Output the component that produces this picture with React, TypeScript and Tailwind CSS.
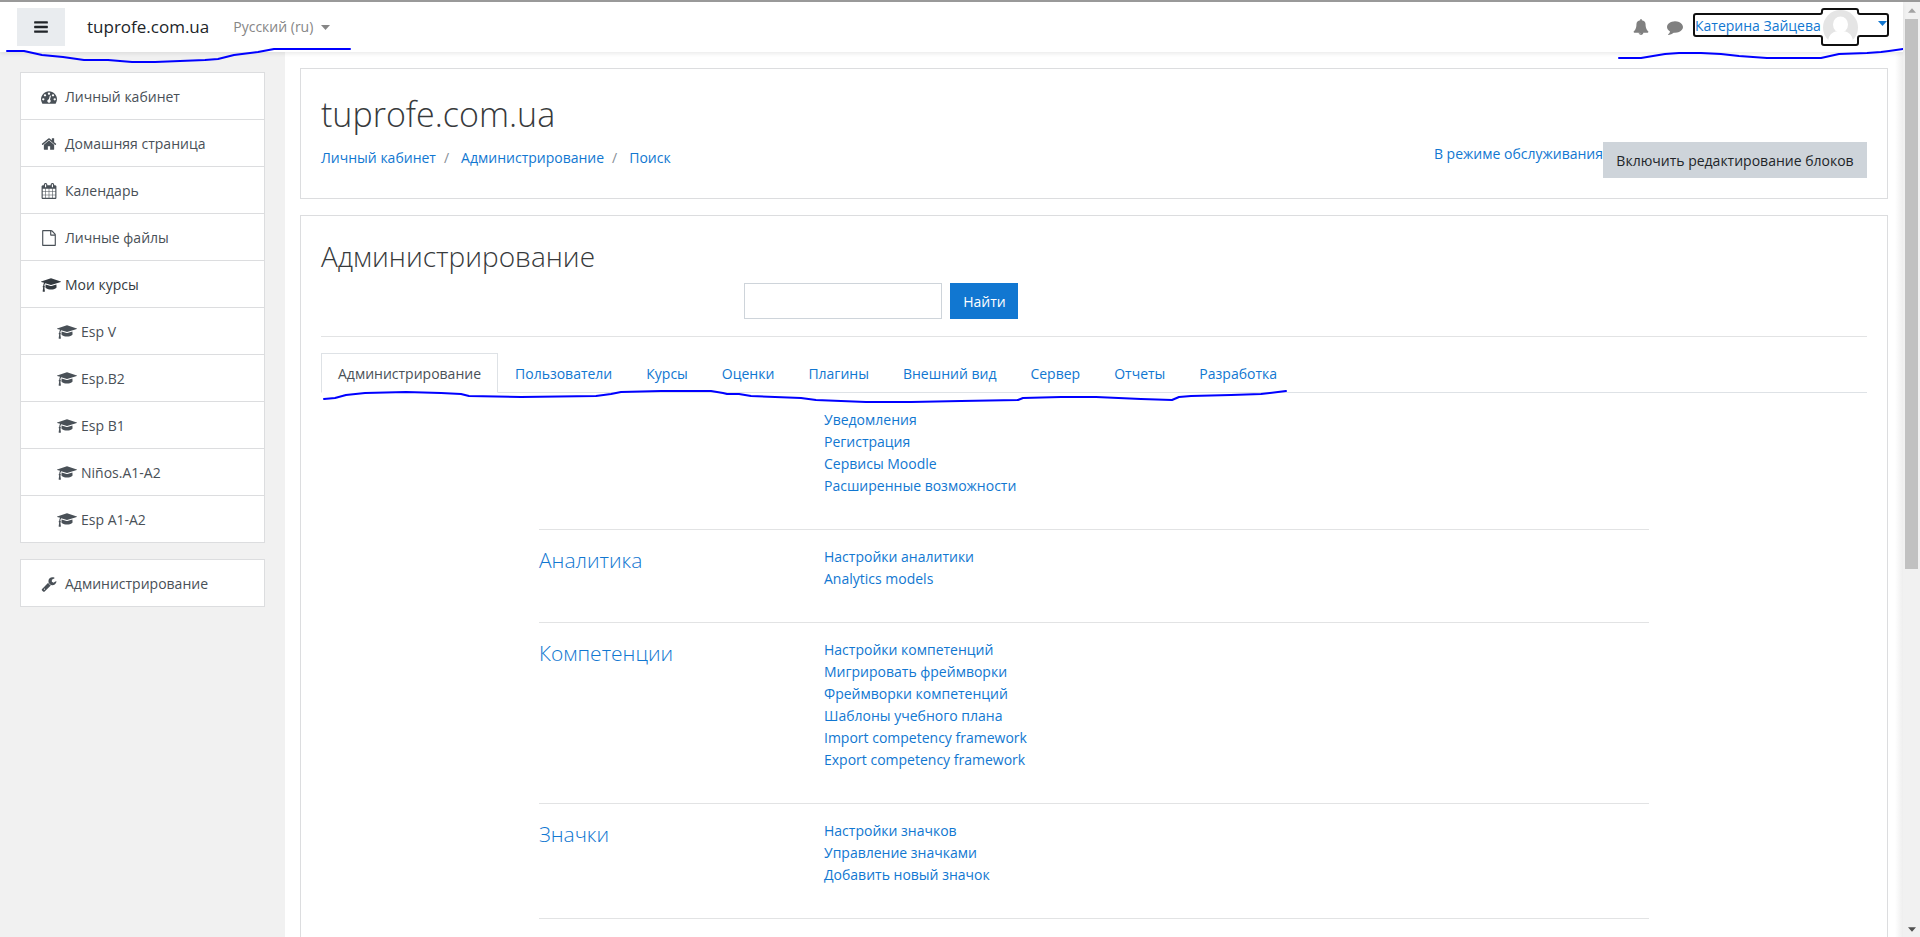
import type { ReactNode } from "react";

const icons = {
  bars: {
    box: "0 0 1792 1792",
    d: "M1664 1344v128q0 26-19 45t-45 19h-1408q-26 0-45-19t-19-45v-128q0-26 19-45t45-19h1408q26 0 45 19t19 45zm0-512v128q0 26-19 45t-45 19h-1408q-26 0-45-19t-19-45v-128q0-26 19-45t45-19h1408q26 0 45 19t19 45zm0-512v128q0 26-19 45t-45 19h-1408q-26 0-45-19t-19-45v-128q0-26 19-45t45-19h1408q26 0 45 19t19 45z",
  },
  dashboard: {
    box: "0 0 1792 1792",
    d: "M384 1152q0-53-37.5-90.5t-90.5-37.5-90.5 37.5-37.5 90.5 37.5 90.5 90.5 37.5 90.5-37.5 37.5-90.5zm192-448q0-53-37.5-90.5t-90.5-37.5-90.5 37.5-37.5 90.5 37.5 90.5 90.5 37.5 90.5-37.5 37.5-90.5zm428 481l101-382q6-26-7.5-48.5t-38.5-29.5-48 6.5-30 39.5l-101 382q-60 5-107 43.5t-63 98.5q-20 77 20 146t117 89 146-20 89-117q16-60-6-117t-72-91zm660-33q0-53-37.5-90.5t-90.5-37.5-90.5 37.5-37.5 90.5 37.5 90.5 90.5 37.5 90.5-37.5 37.5-90.5zm-640-640q0-53-37.5-90.5t-90.5-37.5-90.5 37.5-37.5 90.5 37.5 90.5 90.5 37.5 90.5-37.5 37.5-90.5zm448 192q0-53-37.5-90.5t-90.5-37.5-90.5 37.5-37.5 90.5 37.5 90.5 90.5 37.5 90.5-37.5 37.5-90.5zm320 448q0 261-141 483-19 29-54 29h-1402q-35 0-54-29-141-221-141-483 0-182 71-348t191-286 286-191 348-71 348 71 286 191 191 286 71 348z",
  },
  home: {
    box: "0 0 1792 1792",
    d: "M1472 992v480q0 26-19 45t-45 19h-384v-384h-256v384h-384q-26 0-45-19t-19-45v-480q0-1 .5-3t.5-3l575-474 575 474q1 2 1 6zm223-69l-62 74q-8 9-21 11h-3q-13 0-21-7l-692-577-692 577q-12 8-24 7-13-2-21-11l-62-74q-8-10-7-23.5t11-21.5l719-599q32-26 76-26t76 26l244 204v-195q0-14 9-23t23-9h192q14 0 23 9t9 23v408l219 182q10 8 11 21.5t-7 23.5z",
  },
  calendar: {
    box: "0 0 1792 1792",
    d: "M192 1664h288v-288h-288v288zm352 0h320v-288h-320v288zm-352-352h288v-320h-288v320zm352 0h320v-320h-320v320zm-352-384h288v-288h-288v288zm736 736h320v-288h-320v288zm-384-736h320v-288h-320v288zm768 736h288v-288h-288v288zm-384-352h320v-320h-320v320zm-352-864v-288q0-13-9.5-22.5t-22.5-9.5h-64q-13 0-22.5 9.5t-9.5 22.5v288q0 13 9.5 22.5t22.5 9.5h64q13 0 22.5-9.5t9.5-22.5zm736 864h288v-320h-288v320zm-384-384h320v-288h-320v288zm384 0h288v-288h-288v288zm32-480v-288q0-13-9.5-22.5t-22.5-9.5h-64q-13 0-22.5 9.5t-9.5 22.5v288q0 13 9.5 22.5t22.5 9.5h64q13 0 22.5-9.5t9.5-22.5zm384-64v1280q0 52-38 90t-90 38h-1408q-52 0-90-38t-38-90v-1280q0-52 38-90t90-38h128v-96q0-66 47-113t113-47h64q66 0 113 47t47 113v96h384v-96q0-66 47-113t113-47h64q66 0 113 47t47 113v96h128q52 0 90 38t38 90z",
  },
  file: {
    box: "0 0 1792 1792",
    d: "M1596 380q28 28 48 76t20 88v1152q0 40-28 68t-68 28h-1344q-40 0-68-28t-28-68v-1600q0-40 28-68t68-28h896q40 0 88 20t76 48zm-444-244v376h376q-10-29-22-41l-313-313q-12-12-41-22zm384 1528v-1024h-416q-40 0-68-28t-28-68v-416h-768v1536h1280z",
  },
  cap: {
    box: "0 0 2304 1792",
    d: "M1774 836l18 316q4 69-82 128t-235 93.5-323 34.5-323-34.5-235-93.5-82-128l18-316 574 181q22 7 48 7t48-7zm530-324q0 23-22 31l-1120 352q-4 1-10 1t-10-1l-652-206q-43 34-71 111.5t-34 178.5q63 36 63 109 0 69-58 107l58 433q2 14-8 25-9 11-24 11h-192q-15 0-24-11-10-11-8-25l58-433q-58-38-58-107 0-73 65-111 11-207 98-330l-333-104q-22-8-22-31t22-31l1120-352q4-1 10-1t10 1l1120 352q22 8 22 31z",
  },
  wrench: {
    box: "0 0 1792 1792",
    d: "M448 1472q0-26-19-45t-45-19-45 19-19 45 19 45 45 19 45-19 19-45zm644-420l-682 682q-37 37-90 37-52 0-91-37l-106-108q-38-36-38-90 0-53 38-91l681-681q39 98 114.5 173.5t173.5 114.5zm634-435q0 39-23 106-47 134-164.5 217.5t-258.5 83.5q-185 0-316.5-131.5t-131.5-316.5 131.5-316.5 316.5-131.5q58 0 121.5 16.5t107.5 46.5q16 11 16 28t-16 28l-293 169v224l193 107q5-3 79-48.5t135.5-81 70.5-35.5q15 0 23.5 10t8.5 25z",
  },
  bell: {
    box: "0 0 1792 1792",
    d: "M912 1696q0-16-16-16-59 0-101.5-42.5t-42.5-101.5q0-16-16-16t-16 16q0 73 51.5 124.5t124.5 51.5q16 0 16-16zm816-288q0 52-38 90t-90 38h-448q0 106-75 181t-181 75-181-75-75-181h-448q-52 0-90-38t-38-90q50-42 91-88t85-119.5 74.5-158.5 50-206 19.5-260q0-152 117-282.5t307-158.5q-8-19-8-39 0-40 28-68t68-28 68 28 28 68q0 20-8 39 190 28 307 158.5t117 282.5q0 139 19.5 260t50 206 74.5 158.5 85 119.5 91 88z",
  },
  comment: {
    box: "0 0 1792 1792",
    d: "M1792 896q0 174-120 321.5t-326 233-450 85.5q-70 0-145-8-198 175-460 242-49 14-114 22-17 2-30.5-9t-17.5-29v-1q-3-4-.5-12t2-10 4.5-9.5l6-9 7-8.5 8-9q7-8 31-34.5t34.5-38 31-39.5 32.5-51 27-59 26-76q-157-89-247.5-220t-90.5-281q0-130 71-248.5t191-204.5 286-136.5 348-50.5q244 0 450 85.5t326 233 120 321.5z",
  },
};

type IconName = keyof typeof icons;

function Icon({ name, className }: { name: IconName; className: string }) {
  return (
    <svg viewBox={icons[name].box} className={className} fill="currentColor" aria-hidden="true">
      <path d={icons[name].d} />
    </svg>
  );
}

function Caret({ className }: { className: string }) {
  return (
    <svg viewBox="0 0 18 10" className={className} fill="currentColor" aria-hidden="true">
      <path d="M0 0h18L9 10z" />
    </svg>
  );
}

// Freehand marker line laid over the page
function Marker({ className, box, points }: { className: string; box: string; points: string }) {
  return (
    <svg viewBox={box} className={className} fill="none" stroke="#0000ff" strokeWidth="2" aria-hidden="true">
      <polyline points={points} strokeLinejoin="round" strokeLinecap="round" />
    </svg>
  );
}

const courses = ["Esp V", "Esp.B2", "Esp B1", "Niños.A1-A2", "Esp A1-A2"];

const tabs = [
  "Администрирование",
  "Пользователи",
  "Курсы",
  "Оценки",
  "Плагины",
  "Внешний вид",
  "Сервер",
  "Отчеты",
  "Разработка",
];

const sections = [
  {
    title: "",
    links: ["Уведомления", "Регистрация", "Сервисы Moodle", "Расширенные возможности"],
  },
  {
    title: "Аналитика",
    links: ["Настройки аналитики", "Analytics models"],
  },
  {
    title: "Компетенции",
    links: [
      "Настройки компетенций",
      "Мигрировать фреймворки",
      "Фреймворки компетенций",
      "Шаблоны учебного плана",
      "Import competency framework",
      "Export competency framework",
    ],
  },
  {
    title: "Значки",
    links: ["Настройки значков", "Управление значками", "Добавить новый значок"],
  },
];

function NavItem({ icon, children, nested, current }: { icon: IconName; children: ReactNode; nested?: boolean; current?: boolean }) {
  return (
    <li className="border-b border-[#dcdddf]">
      <a
        href="#"
        className={`flex h-[46px] items-center pr-5 pt-0.5 ${nested ? "pl-9" : "pl-5"} ${current ? "text-[#343a40]" : "text-[#495057]"}`}
      >
        <span className="flex w-6 shrink-0">
          <Icon name={icon} className={icon === "cap" ? "h-4 w-5" : "h-4 w-4"} />
        </span>
        {children}
      </a>
    </li>
  );
}

function Header() {
  return (
    <header className="relative z-10 flex h-[50px] shrink-0 items-center bg-white pl-[17px] pr-3.5 shadow-[0_2px_4px_rgba(0,0,0,0.08)]">
      <button aria-label="Боковая панель" className="flex h-[38px] w-12 items-center justify-center bg-[#e9ecef] text-[#212529]">
        <Icon name="bars" className="h-4 w-4" />
      </button>
      <a href="#" className="ml-[22px] text-[17px] text-[#212529]">
        tuprofe.com.ua
      </a>
      <button className="ml-6 flex items-center gap-2 text-[#868686]">
        Русский (ru)
        <Caret className="h-[5px] w-[9px]" />
      </button>
      <Marker
        className="absolute left-0 top-11 h-5 w-[360px]"
        box="0 0 360 20"
        points="7,5 24,5 42,9 63,11 84,14 108,14 132,16 155,16 180,15 205,14 218,13 234,9 258,6 274,3 320,3 350,3"
      />
      <div className="ml-auto flex items-center">
        <button aria-label="Уведомления" className="mr-[18px] text-[#808080]">
          <Icon name="bell" className="h-4 w-4" />
        </button>
        <button aria-label="Сообщения" className="text-[#808080]">
          <Icon name="comment" className="h-4 w-4" />
        </button>
        <a href="#" className="relative ml-2.5 flex h-[38px] w-[196px] items-center pl-[2px] text-[#1177d1]">
          <span className="w-[128px] whitespace-nowrap pb-0.5">Катерина Зайцева</span>
          <svg viewBox="0 0 70 70" className="h-[35px] w-[35px]" aria-hidden="true">
            <circle cx="35" cy="35" r="35" fill="#e5e5e5" />
            <ellipse cx="35" cy="29" rx="15" ry="16" fill="#fff" />
            <path d="M10 62c2-14 10-20 25-20s23 6 25 20c-6 8-16 10-25 10s-19-2-25-10z" fill="#fff" />
          </svg>
          <Caret className="mb-[7px] ml-5 h-[5px] w-[9px]" />
          <svg viewBox="0 0 196 38" className="absolute inset-0 h-[38px] w-[196px]" fill="none" stroke="#101010" strokeWidth="2" aria-hidden="true">
            <path d="M3 6H127q2 0 2-2V3q0-2 2-2H163q2 0 2 2V4q0 2 2 2H193q2 0 2 2V26q0 2-2 2H167q-2 0-2 2V35q0 2-2 2H131q-2 0-2-2V30q0-2-2-2H3q-2 0-2-2V8q0-2 2-2z" />
          </svg>
        </a>
      </div>
      <Marker
        className="absolute right-0 top-11 h-4 w-[286px]"
        box="0 0 286 16"
        points="2,12 24,12 36,10 48,8 62,7 84,7 104,8 122,10 150,12 204,12 222,8 250,7 264,6 272,5 286,3"
      />
    </header>
  );
}

function Sidebar() {
  return (
    <aside className="w-[285px] shrink-0 bg-[#f1f1f1] px-5 pt-5">
      <nav className="flex flex-col gap-4">
        <ul className="border border-b-0 border-[#dcdddf] bg-white">
          <NavItem icon="dashboard">Личный кабинет</NavItem>
          <NavItem icon="home">Домашняя страница</NavItem>
          <NavItem icon="calendar">Календарь</NavItem>
          <NavItem icon="file">Личные файлы</NavItem>
          <NavItem icon="cap" current>
            Мои курсы
          </NavItem>
          {courses.map((course) => (
            <NavItem key={course} icon="cap" nested>
              {course}
            </NavItem>
          ))}
        </ul>
        <ul className="border border-b-0 border-[#dcdddf] bg-white">
          <NavItem icon="wrench">Администрирование</NavItem>
        </ul>
      </nav>
    </aside>
  );
}

function PageHeader() {
  return (
    <section className="flex items-start justify-between border border-[#dcdddf] bg-white p-5">
      <div>
        <h1 className="mt-1 text-[34px] font-light leading-[42px] text-[#373a3c]">tuprofe.com.ua</h1>
        <nav aria-label="Навигация" className="mt-3 flex leading-[22px] text-[#1177d1]">
          <a href="#">Личный кабинет</a>
          <span className="pl-2 pr-3 text-[#868e96]">/</span>
          <a href="#">Администрирование</a>
          <span className="pl-2 pr-3 text-[#868e96]">/</span>
          <a href="#">Поиск</a>
        </nav>
      </div>
      <div className="flex items-start pt-[53px]">
        <a href="#" className="leading-6 text-[#1177d1]">
          В режиме обслуживания
        </a>
        <button className="h-9 w-[264px] whitespace-nowrap bg-[#ced4da] pt-0.5 text-[#212529]">
          Включить редактирование блоков
        </button>
      </div>
    </section>
  );
}

function AdminPanel() {
  return (
    <section className="mt-4 border border-[#dcdddf] bg-white p-5">
      <h2 className="text-[28px] font-light leading-10 text-[#373a3c]">Администрирование</h2>
      <form className="ml-[27%] mt-[7px] flex gap-2 pl-1.5">
        <input aria-label="Поиск" className="h-9 w-[198px] border border-[#ced4da] px-3" />
        <button type="button" className="h-9 w-[68px] bg-[#1177d1] pt-0.5 text-white">
          Найти
        </button>
      </form>
      <hr className="mt-[17px] border-[#e2e3e4]" />
      <div className="relative mt-4">
        <ul className="flex border-b border-[#dee2e6]">
          {tabs.map((tab, i) => (
            <li key={tab}>
              <a
                href="#"
                className={`-mb-px flex h-10 items-center border px-4 pt-0.5 ${
                  i === 0 ? "border-[#dee2e6] border-b-white bg-white text-[#495057]" : "border-transparent text-[#1177d1]"
                }`}
              >
                {tab}
              </a>
            </li>
          ))}
        </ul>
        <Marker
          className="absolute left-0 top-9 h-4 w-[970px]"
          box="0 0 970 16"
          points="3,10 14,9 25,6 44,4 85,3 120,4 140,5 148,7 200,8 275,7 290,5 300,3 340,2 390,2 402,4 406,5 418,5 430,7 480,9 495,11 545,13 590,13 640,12 697,11 702,9 740,8 775,8 820,10 851,11 858,8 870,7 910,6 940,5 965,2"
        />
      </div>
      <div className="mx-auto max-w-[1110px] pt-4">
        {sections.map((section) => (
          <div key={section.links[0]} className="mb-4 grid grid-cols-[285px_1fr] border-b border-[#e2e3e4] pb-8">
            <h3 className="text-[21px] font-light leading-7 text-[#1177d1]">
              {section.title && <a href="#">{section.title}</a>}
            </h3>
            <ul className="leading-[22px] text-[#1177d1]">
              {section.links.map((link) => (
                <li key={link}>
                  <a href="#">{link}</a>
                </li>
              ))}
            </ul>
          </div>
        ))}
      </div>
    </section>
  );
}

function Scrollbar() {
  return (
    <div className="flex w-[17px] shrink-0 flex-col items-center bg-[#f1f1f1]">
      <Caret className="my-[6px] h-[5px] w-2 rotate-180 text-[#a3a3a3]" />
      <div className="h-[550px] w-[13px] bg-[#c1c1c1]" />
      <Caret className="mb-[5px] mt-auto h-[5px] w-2 text-[#505050]" />
    </div>
  );
}

export default function App() {
  return (
    <div className="flex h-screen overflow-hidden border-t-2 border-[#999999] bg-white font-['Open_Sans',sans-serif] text-sm">
      <div className="flex min-w-0 flex-1 flex-col">
        <Header />
        <div className="flex min-h-0 flex-1">
          <Sidebar />
          <main className="min-w-0 flex-1 pl-[15px] pr-[7px] pt-4">
            <PageHeader />
            <AdminPanel />
          </main>
          <div className="w-2 shrink-0 bg-linear-to-r from-white to-[#eeeeee]" />
        </div>
      </div>
      <Scrollbar />
    </div>
  );
}
